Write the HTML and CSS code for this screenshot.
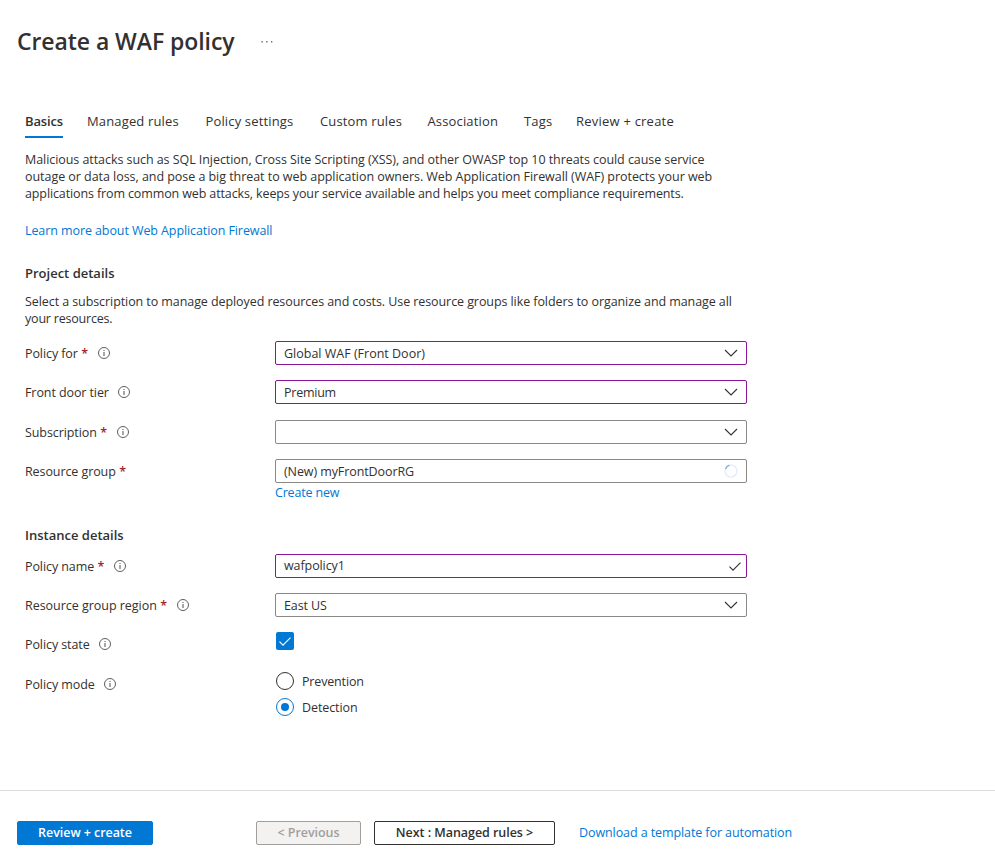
FILE: index.html
```html
<!DOCTYPE html>
<html lang="en">
<head>
<meta charset="utf-8">
<title>Create a WAF policy</title>
<link rel="stylesheet" href="styles.css">
</head>
<body>
<svg class="defs" aria-hidden="true">
  <symbol id="info" viewBox="0 0 12 12"><circle cx="6" cy="6" r="5.5" fill="none" stroke="#605e5c" stroke-width="1"/><path d="M6 5v4M6 3v1" stroke="#605e5c" stroke-width="1.1"/></symbol>
  <symbol id="chevron" viewBox="0 0 14 8"><path d="M1 1 7 7 13 1" fill="none" stroke="#323130" stroke-width="1.1"/></symbol>
  <symbol id="check" viewBox="0 0 12 9"><path d="M.5 4.7 4 8.2 11.5.7" fill="none" stroke="currentColor" stroke-width="1.1"/></symbol>
</svg>
<header class="title-bar">
  <h1><span>Create a WAF policy</span></h1>
  <svg class="more" viewBox="0 0 12 2"><path d="M.5 0h1.2v1.4H.5zM5.3 0h1.2v1.4H5.3zM10.1 0h1.2v1.4h-1.2z" fill="#605e5c"/></svg>
</header>
<nav class="tabs">
  <a class="tab active">Basics</a>
  <a class="tab">Managed rules</a>
  <a class="tab">Policy settings</a>
  <a class="tab">Custom rules</a>
  <a class="tab">Association</a>
  <a class="tab">Tags</a>
  <a class="tab">Review + create</a>
</nav>
<main>
  <p class="copy intro"><span class="l1">Malicious attacks such as SQL Injection, Cross Site Scripting (XSS), and other OWASP top 10 threats could cause service</span><br><span class="l2">outage or data loss, and pose a big threat to web application owners. Web Application Firewall (WAF) protects your web</span><br><span class="l3">applications from common web attacks, keeps your service available and helps you meet compliance requirements.</span></p>
  <a class="link learn">Learn more about Web Application Firewall</a>
  <h2 class="project">Project details</h2>
  <p class="copy select-copy"><span class="l4">Select a subscription to manage deployed resources and costs. Use resource groups like folders to organize and manage all</span><br><span class="l5">your resources.</span></p>

  <section class="fields project-fields">
    <div class="row"><div class="label"><span>Policy for</span><b>*</b><svg class="info"><use href="#info"/></svg></div><div class="box edited"><span class="v-global">Global WAF (Front Door)</span><svg class="chevron"><use href="#chevron"/></svg></div></div>
    <div class="row"><div class="label"><span>Front door tier</span><svg class="info"><use href="#info"/></svg></div><div class="box edited"><span class="v-premium">Premium</span><svg class="chevron"><use href="#chevron"/></svg></div></div>
    <div class="row"><div class="label"><span>Subscription</span><b>*</b><svg class="info"><use href="#info"/></svg></div><div class="box"><span></span><svg class="chevron"><use href="#chevron"/></svg></div></div>
    <div class="row"><div class="label"><span>Resource group</span><b>*</b></div><div class="box"><span>(New) myFrontDoorRG</span><svg class="spinner" viewBox="0 0 14 14"><circle cx="7" cy="7" r="6" fill="none" stroke="#deecf9" stroke-width="1.2"/><path d="M1.5 5A6 6 0 0 1 5.5 1.2" fill="none" stroke="#71afe5" stroke-width="1.2"/></svg></div></div>
  </section>
  <a class="link create-new">Create new</a>

  <h2 class="instance">Instance details</h2>
  <section class="fields instance-fields">
    <div class="row"><div class="label"><span>Policy name</span><b>*</b><svg class="info"><use href="#info"/></svg></div><div class="box edited name"><span>wafpolicy1</span><svg class="valid"><use href="#check"/></svg></div></div>
    <div class="row"><div class="label region"><span>Resource group region</span><b>*</b><svg class="info"><use href="#info"/></svg></div><div class="box"><span>East US</span><svg class="chevron"><use href="#chevron"/></svg></div></div>
    <div class="row"><div class="label"><span>Policy state</span><svg class="info"><use href="#info"/></svg></div><div class="checkbox"><svg><use href="#check"/></svg></div></div>
    <div class="row mode"><div class="label"><span>Policy mode</span><svg class="info"><use href="#info"/></svg></div>
      <div class="radios">
        <div class="radio"><i></i><span>Prevention</span></div>
        <div class="radio selected"><i></i><span>Detection</span></div>
      </div>
    </div>
  </section>
</main>
<footer>
  <a class="btn primary"><span>Review + create</span></a>
  <a class="btn disabled"><span>&lt; Previous</span></a>
  <a class="btn next"><span>Next : Managed rules &gt;</span></a>
  <a class="link download">Download a template for automation</a>
</footer>
</body>
</html>
```
FILE: styles.css
```css
* { box-sizing: border-box; }
body {
  margin: 0;
  height: 863px;
  display: flex;
  flex-direction: column;
  overflow: hidden;
  background: #fff;
  color: #323130;
  font: 12.5px/17px "Open Sans", "Noto Sans", sans-serif;
  letter-spacing: -0.09px;
  white-space: nowrap;
}
h1, h2, p { margin: 0; }
svg { display: block; flex: none; }
.defs { position: absolute; width: 0; height: 0; }

.title-bar { height: 108px; padding: 25px 0 0 17px; display: flex; align-items: flex-start; }
h1 { width: 244px; font-size: 23px; line-height: 32px; font-weight: 600; letter-spacing: -0.07px; }
.more { width: 12px; height: 2px; margin-top: 16px; }

.tabs { height: 30px; padding-left: 25px; display: grid; grid-template-columns: 62px 118.5px 114.5px 107.5px 96.5px 52px 110px; font-size: 13px; letter-spacing: 0.15px; }
.tab { justify-self: start; height: 30px; line-height: 27px; }
.tab:last-child { letter-spacing: 0.22px; }
.tab.active { width: 38px; font-weight: 600; letter-spacing: -0.15px; border-bottom: 2px solid #0078d4; }

main { flex: 1; padding-left: 25px; }
.intro { padding-top: 13px; height: 84px; }
.l1 { letter-spacing: -0.06px; }
.l2 { letter-spacing: -0.045px; }
.l3 { letter-spacing: -0.12px; }
.l4 { letter-spacing: -0.08px; }
.l5 { letter-spacing: -0.2px; }
.link { color: #0078d4; }
.learn { display: block; line-height: 17px; }
h2 { font-size: 13px; line-height: 18px; font-weight: 600; letter-spacing: 0; }
.project { margin-top: 25px; }
.select-copy { margin-top: 11px; }

.fields { display: grid; }
.project-fields { margin-top: 14px; grid-template-rows: 39px 40px 39px 24px; }
.row { display: grid; grid-template-columns: 250px 472px; align-items: start; }
.label { height: 24px; display: flex; align-items: center; }
.label b { margin-left: 3.5px; color: #a4262c; font-weight: 600; }
.label.region { letter-spacing: -0.03px; }
.info { width: 12px; height: 12px; margin: 0 0 0 9px; }
.label b + .info { margin-left: 9.5px; }
.box { height: 24px; border: 1px solid #8a8886; border-radius: 2px; padding: 0 8px; display: flex; align-items: center; justify-content: space-between; }
.box.edited { border-color: #881798; }
.box.name span { margin-bottom: 2px; }
.v-global { letter-spacing: 0; }
.v-premium { letter-spacing: -0.25px; }
.chevron { width: 14px; height: 8px; }
.spinner { width: 14px; height: 14px; }
.valid { width: 12px; height: 9px; margin-right: -3px; color: #323130; }
.create-new { display: block; margin: 1px 0 0 250px; letter-spacing: -0.18px; }

.instance { margin-top: 25px; }
.instance-fields { margin-top: 10px; grid-template-rows: 39px 39px 40px 60px; }
.checkbox { width: 18px; height: 18px; margin-left: 1px; border-radius: 2px; background: #0078d4; color: #fff; display: grid; place-items: center; }
.checkbox svg { width: 12px; height: 9px; }
.radios { padding-left: 1px; }
.radio { height: 26px; display: flex; align-items: center; gap: 8px; }
.radio:first-child { margin-top: -4px; letter-spacing: -0.16px; }
.radio i { width: 18px; height: 18px; border: 1px solid #323130; border-radius: 50%; display: grid; place-items: center; }
.radio.selected i { border-color: #0078d4; }
.radio.selected i::after { content: ""; width: 8px; height: 8px; border-radius: 50%; background: #0078d4; }

footer { height: 73px; border-top: 1px solid #dcdcdc; padding: 30px 0 0 17px; display: flex; }
.btn { height: 24px; border: 1px solid #323130; border-radius: 2px; display: flex; align-items: center; justify-content: center; padding-bottom: 1px; font-weight: 600; letter-spacing: -0.05px; }
.primary { width: 136px; background: #0078d4; border-color: #0078d4; color: #fff; }
.disabled { width: 105px; margin-left: 103px; background: #f3f2f1; border-color: #a19f9d; color: #a19f9d; }
.next { width: 181px; margin-left: 13px; }
.download { margin-left: 24px; line-height: 23px; }
```
